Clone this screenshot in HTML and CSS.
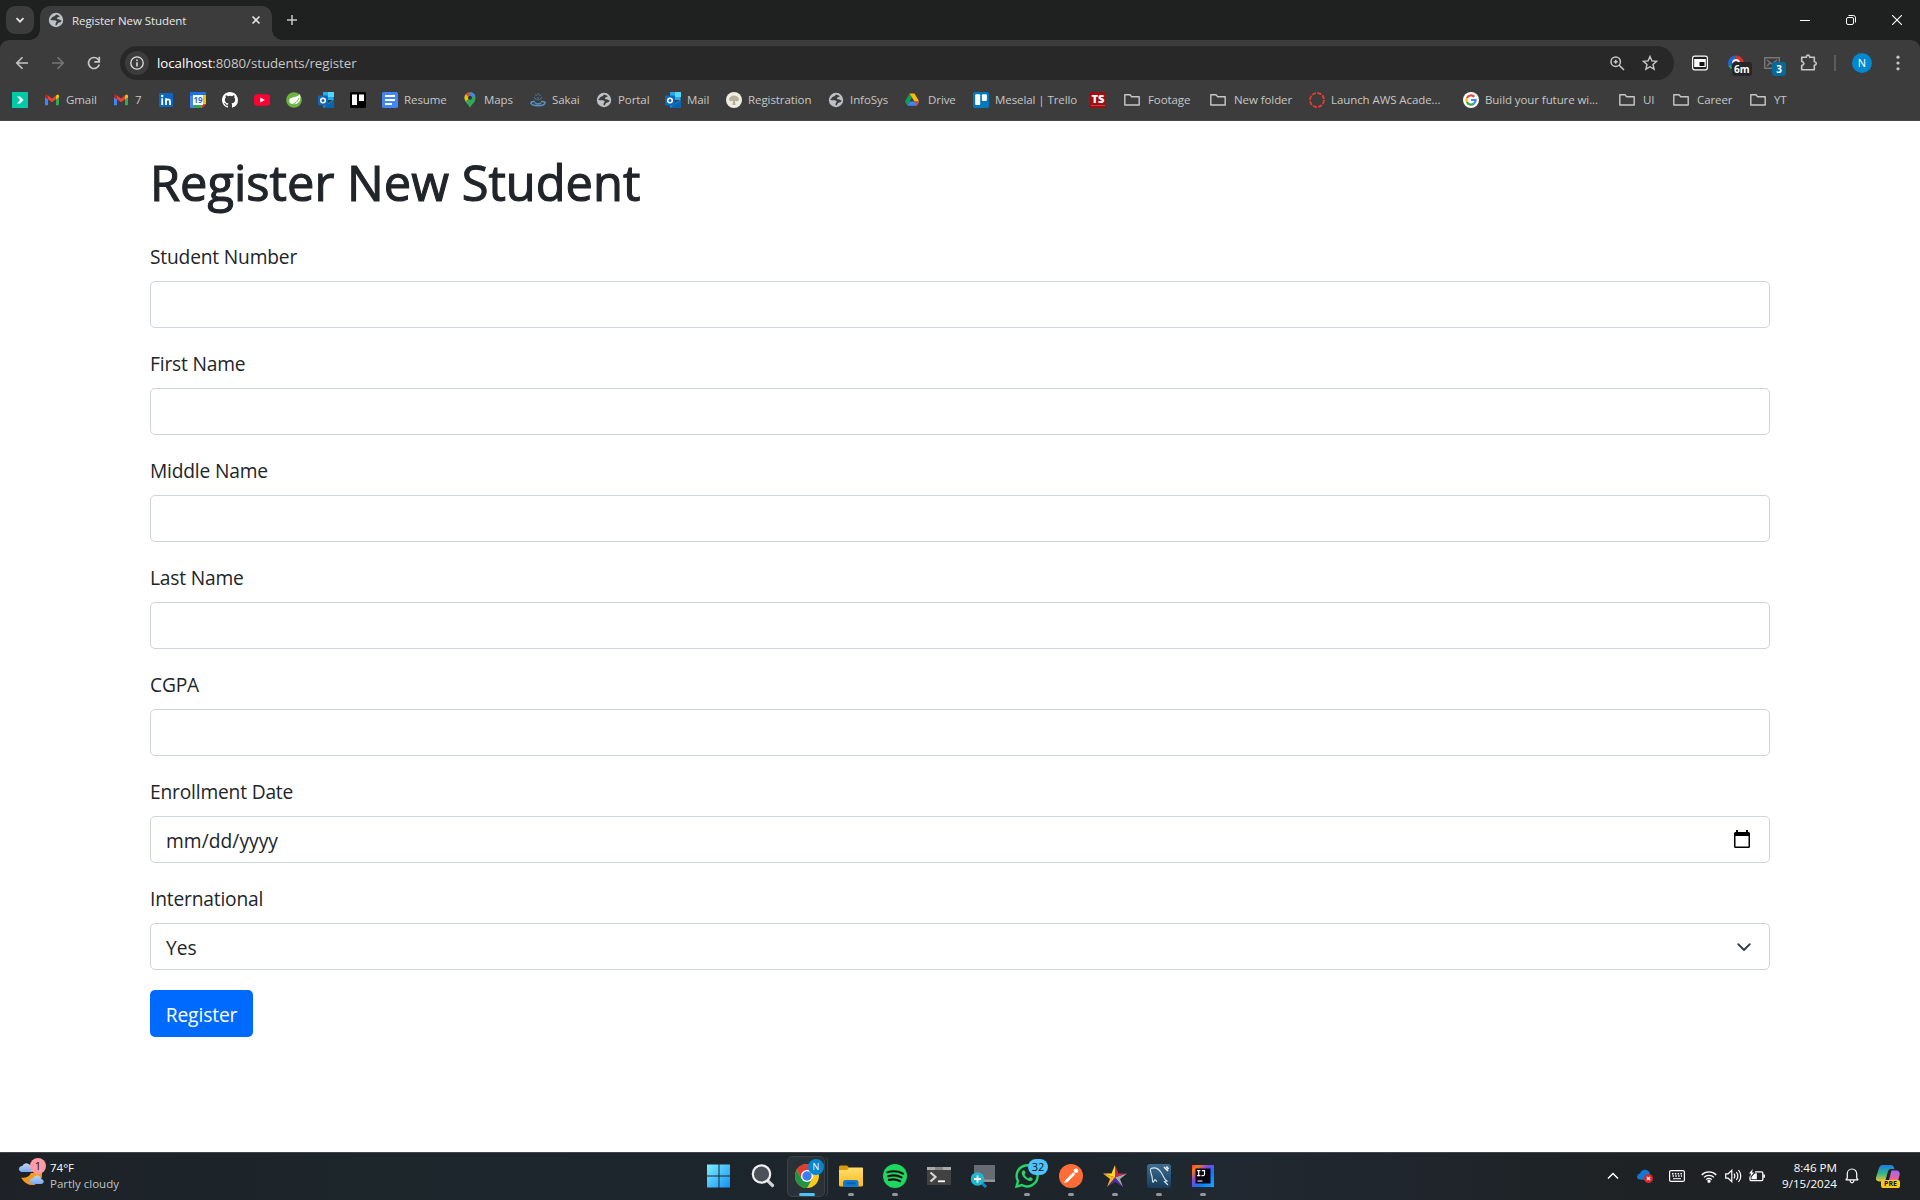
FILE: index.html
```html
<!DOCTYPE html>
<html lang="en">
<head>
<meta charset="utf-8">
<title>Register New Student</title>
<link rel="stylesheet" href="styles.css">
</head>
<body>
<svg class="defs" width="0" height="0">
  <symbol id="globe" viewBox="0 0 16 16"><circle cx="8" cy="8" r="7.200" fill="#bdc1c6"/><path d="M8.300 2.400c-1.700 1-.8 1.900-2.800 2.200C4 4.900 4.100 6.300 2.400 7.500c.5 1.500 5.100-.2 6.100 1.500.7 1.500-1.600 1.600-.8 4.500 2 0 1.200-1.900 2.900-2.700 1.200-.8 2.600-.1 2.900-2.600-1.500.5-1.700-1-2.800-.9-1.200.1-2.200-.6-1.500-1.600.6-.9 2.300-.3 2.500-1.800z" fill="#3c3c3c"/></symbol>
  <symbol id="gmail" viewBox="0 0 16 16"><path d="M1 13.200V5l3 2.200v6z" fill="#4285f4"/><path d="M12 13.200v-6L15 5v7.200q0 1-1 1z" fill="#34a853"/><path d="M1 5.200V4q0-1.500 1.600-1.400L4 3.600v3.600z" fill="#c5221f"/><path d="M4 3.500l4 3 4-3v3.800L8 10.300 4 7.300z" fill="#ea4335"/><path d="M12 3.500l1.400-.9Q15 2.600 15 4v1.200l-3 2.200z" fill="#fbbc04"/></symbol>
  <symbol id="outlook" viewBox="0 0 16 16"><path d="M5 0h10.500v8H5z" fill="#28a8ea"/><path d="M10 0h6v5h-6z" fill="#50d9ff"/><path d="M5 8l5.500 3L16 7v9H5z" fill="#1490df"/><path d="M5 16l11-8v8z" fill="#0a64ad"/><rect y="3.500" width="10" height="10" rx="1" fill="#0f65b9"/><circle cx="5" cy="8.500" r="2.300" fill="none" stroke="#fff" stroke-width="1.500"/></symbol>
  <symbol id="folder" viewBox="0 0 16 16"><path d="M.8 13V2.800H6l1.700 1.900h7.500V13z" fill="none" stroke="#c7c7c7" stroke-width="1.400" stroke-linejoin="round"/></symbol>
</svg>

<header class="chrome">
  <div class="tabstrip">
    <div class="tab-search"><svg viewBox="0 0 10 10" width="10" height="10"><path d="M1.500 3.200L5 6.700l3.500-3.500" fill="none" stroke="#e3e3e3" stroke-width="1.800"/></svg></div>
    <div class="tab">
      <svg class="i16"><use href="#globe"/></svg>
      <span class="tab-title">Register New Student</span>
      <svg width="10" height="10" viewBox="0 0 10 10"><path d="M1.500 1.500l7 7m0-7l-7 7" stroke="#e3e3e3" stroke-width="1.600"/></svg>
    </div>
    <svg class="new-tab" width="12" height="12" viewBox="0 0 12 12"><path d="M6 1v10M1 6h10" stroke="#c7c7c7" stroke-width="1.500"/></svg>
    <div class="window-buttons">
      <svg width="10" height="10" viewBox="0 0 10 10"><path d="M0 5.500h10" stroke="#fff"/></svg>
      <svg width="10" height="10" viewBox="0 0 10 10"><rect x=".5" y="2.500" width="7" height="7" rx="1.500" fill="none" stroke="#fff"/><path d="M2.500.5h4.700q2.300 0 2.300 2.300v4.700" fill="none" stroke="#fff"/></svg>
      <svg width="10" height="10" viewBox="0 0 10 10"><path d="M0 0l10 10M10 0L0 10" stroke="#fff" stroke-width="1.100"/></svg>
    </div>
  </div>

  <div class="toolbar">
    <nav class="nav">
      <svg width="14" height="14" viewBox="0 0 14 14"><path d="M13 7H2m5.500-5.700L1.800 7l5.700 5.700" fill="none" stroke="#c7c7c7" stroke-width="1.600"/></svg>
      <svg width="14" height="14" viewBox="0 0 14 14"><path d="M1 7h11M6.500 1.300L12.200 7l-5.700 5.700" fill="none" stroke="#767676" stroke-width="1.600"/></svg>
      <svg width="14" height="14" viewBox="0 0 14 14"><path d="M12.300 8.500A5.500 5.500 0 1 1 11 3.200l1.200 1.500" fill="none" stroke="#c7c7c7" stroke-width="1.700"/><path d="M12.300.8v5h-5" fill="none" stroke="#c7c7c7" stroke-width="1.700"/></svg>
    </nav>
    <div class="omnibox">
      <div class="site-info"><svg width="14" height="14" viewBox="0 0 14 14"><circle cx="7" cy="7" r="6.200" fill="none" stroke="#e3e3e3" stroke-width="1.300"/><path d="M7 6.200v4.200M7 3.500V5" stroke="#e3e3e3" stroke-width="1.500"/></svg></div>
      <div class="url"><b>localhost</b>:8080/students/register</div>
      <svg width="15" height="15" viewBox="0 0 15 15"><circle cx="5.700" cy="5.700" r="4.700" fill="none" stroke="#c7c7c7" stroke-width="1.500"/><path d="M9 9l5 5M5.700 3.700v4M3.700 5.700h4" stroke="#c7c7c7" stroke-width="1.500"/></svg>
      <svg class="star" width="16" height="16" viewBox="0 0 16 16"><path d="M8 1.500l1.900 4.400 4.700.4L11 9.500l1.100 4.700L8 11.700l-4.100 2.500L5 9.500 1.400 6.300l4.700-.4z" fill="none" stroke="#c7c7c7" stroke-width="1.400"/></svg>
    </div>
    <div class="extensions">
      <svg width="16" height="16" viewBox="0 0 16 16"><rect x=".6" y="1.200" width="14.800" height="13.600" rx="2" fill="#222" stroke="#fff" stroke-width="1.200"/><rect x="2.200" y="4" width="11.600" height="8" fill="#fff"/><rect x="7.500" y="7" width="5" height="4" fill="#111"/></svg>
      <div class="ext"><svg width="16" height="16" viewBox="0 0 16 16"><path d="M2.800 11.500A6 6 0 0 1 8 2.500" fill="none" stroke="#1967d2" stroke-width="4"/><path d="M8 2.500a6 6 0 0 1 6 6" fill="none" stroke="#d93025" stroke-width="4"/><circle cx="8" cy="8" r="4" fill="#eee"/><circle cx="8" cy="8" r="2" fill="#444"/><path d="M1.500 10.500l2 3" stroke="#34a853" stroke-width="2"/></svg><span class="badge badge-dark">6m</span></div>
      <div class="ext"><svg width="16" height="16" viewBox="0 0 16 16"><path d="M.7 2.700h14.600v10.500H.7zM3 5l5 4 5-4M3 11l3-3" fill="none" stroke="#777" stroke-width="1.500"/></svg><span class="badge badge-blue">3</span></div>
      <svg width="18" height="18" viewBox="0 0 18 18"><path d="M1.700 3.300h4.600Q6.600 1 8 1t1.700 2.300h4.600v4.500q2 .2 2 1.700t-2 1.700v4.600H1.700v-4.300q2.200-.4 2.200-2T1.700 7.500z" fill="none" stroke="#c7c7c7" stroke-width="1.600" stroke-linejoin="round"/></svg>
      <i class="divider"></i>
      <span class="avatar">N</span>
      <svg width="4" height="16" viewBox="0 0 4 16" fill="#c7c7c7"><circle cx="2" cy="2.200" r="1.600"/><circle cx="2" cy="8" r="1.600"/><circle cx="2" cy="13.800" r="1.600"/></svg>
    </div>
  </div>

  <nav class="bookmarks">
    <a><svg class="i16" viewBox="0 0 16 16"><path d="M0 0h16v16H0z" fill="#00cba9"/><path d="M5 4.500h3L11.500 8 8 11.500H5L8 8z" fill="#fff"/></svg></a>
    <a><svg class="i16"><use href="#gmail"/></svg>Gmail</a>
    <a><svg class="i16"><use href="#gmail"/></svg>7</a>
    <a><svg class="i16" viewBox="0 0 16 16"><rect x="1" y="1" width="14" height="14" rx="1" fill="#0a66c2"/><path d="M4.200 6.300V13M8 13V6.300M8 9.500q0-2.200 2-2.200T12 9.500V13" fill="none" stroke="#fff" stroke-width="1.800"/><circle cx="4.200" cy="4" r="1.200" fill="#fff"/></svg></a>
    <a><svg class="i16" viewBox="0 0 16 16"><path d="M0 1q0-1 1-1h14q1 0 1 1v3H0z" fill="#1a73e8"/><path d="M0 4h3v12H1q-1 0-1-1z" fill="#4285f4"/><path d="M13 3h3v9h-3z" fill="#fbbc04"/><path d="M3 13h9v3H3z" fill="#34a853"/><path d="M12 12h4l-4 4z" fill="#ea4335"/><path d="M3 3h10v10H3z" fill="#fff"/><text x="8" y="11" font-size="8" font-weight="700" letter-spacing="0" text-anchor="middle" fill="#1a73e8">19</text></svg></a>
    <a><svg class="i16" viewBox="0 0 16 16"><path fill="#fff" d="M8 0C3.580 0 0 3.580 0 8c0 3.540 2.290 6.530 5.470 7.590.4.070.55-.17.55-.38 0-.19-.01-.82-.01-1.490-2.010.37-2.530-.49-2.690-.94-.09-.23-.48-.94-.82-1.130-.28-.15-.68-.52-.01-.53.63-.01 1.080.58 1.230.82.72 1.210 1.870.87 2.330.66.07-.52.28-.87.51-1.070-1.780-.2-3.640-.89-3.640-3.950 0-.87.31-1.590.82-2.150-.08-.2-.36-1.020.08-2.120 0 0 .67-.21 2.200.82a7.600 7.600 0 0 1 4 0c1.530-1.040 2.200-.82 2.200-.82.44 1.100.16 1.920.08 2.120.51.56.82 1.270.82 2.150 0 3.070-1.870 3.750-3.650 3.950.29.25.54.73.54 1.480 0 1.070-.01 1.930-.01 2.200 0 .21.15.46.55.38A8 8 0 0 0 16 8c0-4.420-3.580-8-8-8z"/></svg></a>
    <a><svg class="i16" viewBox="0 0 16 16"><rect y="2.300" width="16" height="11.500" rx="3" fill="#ff0033"/><path d="M6.300 5.500v5L10.800 8z" fill="#fff"/></svg></a>
    <a><svg class="i16" viewBox="0 0 16 16"><circle cx="8" cy="8" r="7.800" fill="#6db33f"/><path d="M14 2c1.500 6-1 10-5.500 10.300C5.500 12.500 3 11 3.200 8.500 3.500 4.500 11 6 14 2z" fill="#fff"/><path d="M3 13c4 0 8-2 10-7" fill="none" stroke="#6db33f"/></svg></a>
    <a><svg class="i16"><use href="#outlook"/></svg></a>
    <a><svg class="i16" viewBox="0 0 16 16"><rect width="16" height="16" rx="1.500" fill="#000"/><rect x="2" y="2.500" width="5" height="10.500" fill="#fff"/><rect x="9" y="2.500" width="5" height="6.500" fill="#fff"/></svg></a>
    <a><svg class="i16" viewBox="0 0 16 16"><rect width="16" height="16" rx="1.500" fill="#4285f4"/><path d="M3 4h10M3 8h10M3 12h7" stroke="#fff" stroke-width="1.800"/></svg>Resume</a>
    <a><svg class="i16" viewBox="0 0 16 16"><path d="M8 16c-.5-3-5.500-5-5.500-10.300A5.500 5.500 0 0 1 8 .2a5.500 5.500 0 0 1 5.500 5.500C13.500 11 8.500 13 8 16z" fill="#34a853"/><path d="M3.800 9.300A6 6 0 0 1 3.700 2.200L8 5.700z" fill="#fbbc04"/><path d="M3.700 2.200Q5.500 0 8.500.2L6 4.500z" fill="#ea4335"/><path d="M8.500.2q3.300.2 4.600 3.300L8 8z" fill="#4285f4"/><circle cx="8" cy="5.700" r="2" fill="#333"/></svg>Maps</a>
    <a><svg class="i16" viewBox="0 0 16 16" fill="none" stroke="#5792c4"><path d="M1 10.500c-1.500 4 15 4.500 14 0-1-1.700-3-1-4-1M1 10.500c1-1.500 3-1 4-1M5 10.500c1 2 5 2 6 0" stroke-width="1.500"/><path d="M8 8.500V5M6.500 8L4 5M9.500 8L12 5M6.500 4L5.500 2.500M9.500 4l1-1.500M8 3V1" stroke-width=".8"/></svg>Sakai</a>
    <a><svg class="i16"><use href="#globe"/></svg>Portal</a>
    <a><svg class="i16"><use href="#outlook"/></svg>Mail</a>
    <a><svg class="i16" viewBox="0 0 16 16"><circle cx="8" cy="8" r="8" fill="#efede0"/><path d="M3 8q0-4 5-4.500Q13 4 13 8q-2 2-4 .8L9.500 13h-3L7 8.800Q4.500 10 3 8z" fill="#b5b09c"/></svg>Registration</a>
    <a><svg class="i16"><use href="#globe"/></svg>InfoSys</a>
    <a class="wide"><svg class="i16" viewBox="0 0 16 16"><path d="M5.500 1.500L1 9.500l2.300 4L8 5.500z" fill="#0f9d58"/><path d="M5.500 1.500h5l4.700 8h-4.700z" fill="#fbbc04"/><path d="M3.300 13.700l2.400-4.200h9.500l-2.400 4.200z" fill="#4285f4"/><path d="M10.500 9.500h4.700l-2.400 4.200z" fill="#ea4335"/></svg>Drive</a>
    <a><svg class="i16" viewBox="0 0 16 16"><rect width="16" height="16" rx="2" fill="#0079bf"/><rect x="2.200" y="2.200" width="5" height="10.800" rx="1" fill="#fff"/><rect x="8.900" y="2.200" width="5" height="6.700" rx="1" fill="#fff"/></svg>Meselal | Trello</a>
    <a><svg class="i16" viewBox="0 0 16 16"><path d="M0 0h16v16H0z" fill="#a00d12"/><text x="8" y="10.500" font-size="11" font-weight="800" letter-spacing="0" text-anchor="middle" fill="#fff">TS</text><path d="M1 13.500h14" stroke="#c55" stroke-width=".8"/></svg></a>
    <a class="wide"><svg class="i16"><use href="#folder"/></svg>Footage</a>
    <a class="wide"><svg class="i16"><use href="#folder"/></svg>New folder</a>
    <a><svg class="i16" viewBox="0 0 16 16"><circle cx="8" cy="8" r="7" fill="none" stroke="#e13c32" stroke-width="1.900" stroke-dasharray="4.200 1.300"/></svg>Launch AWS Acade...</a>
    <a><svg class="i16" viewBox="0 0 16 16"><circle cx="8" cy="8" r="8" fill="#fff"/><g fill="none" stroke-width="2.200"><path d="M3.900 6A4.600 4.600 0 0 1 11.300 4.800" stroke="#ea4335"/><path d="M3.900 6a4.600 4.600 0 0 0 0 4" stroke="#fbbc04"/><path d="M3.900 10a4.600 4.600 0 0 0 7 1.600" stroke="#34a853"/><path d="M10.900 11.600A4.600 4.600 0 0 0 12.600 8H8" stroke="#4285f4"/></g></svg>Build your future wi...</a>
    <a class="wide"><svg class="i16"><use href="#folder"/></svg>UI</a>
    <a class="wide"><svg class="i16"><use href="#folder"/></svg>Career</a>
    <a class="wide"><svg class="i16"><use href="#folder"/></svg>YT</a>
  </nav>
</header>

<main class="container">
  <h1>Register New Student</h1>
  <form>
    <div class="field"><label for="num">Student Number</label><input id="num" class="control" type="text"></div>
    <div class="field"><label for="first">First Name</label><input id="first" class="control" type="text"></div>
    <div class="field"><label for="middle">Middle Name</label><input id="middle" class="control" type="text"></div>
    <div class="field"><label for="last">Last Name</label><input id="last" class="control" type="text"></div>
    <div class="field"><label for="cgpa">CGPA</label><input id="cgpa" class="control" type="text"></div>
    <div class="field"><label>Enrollment Date</label><div class="control"><span class="date">mm/dd/yyyy</span><svg class="cal" width="16" height="18" viewBox="0 0 16 18"><path d="M0 3.500Q0 2 1.500 2H2V0h2v2h8V0h2v2h.5Q16 2 16 3.500v13q0 1.500-1.500 1.500h-13Q0 18 0 16.500zM1.500 6v10.500h13V6z" fill-rule="evenodd"/></svg></div></div>
    <div class="field"><label>International</label><div class="control"><span>Yes</span><svg width="14" height="9" viewBox="0 0 14 9"><path d="M1.200 1.200L7 7l5.800-5.800" fill="none" stroke="#343a40" stroke-width="1.900" stroke-linecap="round" stroke-linejoin="round"/></svg></div></div>
    <button class="btn" type="button">Register</button>
  </form>
</main>

<footer class="taskbar">
  <div class="weather">
    <div class="weather-icon">
      <svg width="25" height="28" viewBox="0 0 25 28"><defs><linearGradient id="cl" x2="0" y2="1"><stop stop-color="#b9d3fb"/><stop offset="1" stop-color="#7ea9ee"/></linearGradient></defs><path d="M2 19.500c3 1 8 0 10-4.500h11q1 9-8 12Q7 28 2 19.500z" fill="#f59a1c"/><path d="M3 14q-3-.3-3-3t3.300-3Q5 4.500 8.500 5.500T13 9v5z" fill="url(#cl)"/><path d="M14 26q-3.500-.3-3.300-3 .3-2.500 3.300-2.800 1.500-3.400 5-2.700 2.800.7 3.300 3.500 2.500.6 2.500 2.500T22.500 26z" fill="url(#cl)"/></svg>
      <span class="alert">1</span>
    </div>
    <div class="weather-text"><span>74°F</span><span class="muted">Partly cloudy</span></div>
  </div>

  <div class="apps">
    <div class="app"><svg width="24" height="24" viewBox="0 0 24 24"><defs><linearGradient id="win" x2="1" y2="1"><stop stop-color="#7df0ff"/><stop offset="1" stop-color="#1390f5"/></linearGradient></defs><path d="M0 .500h11.500v11H0zM12.500.500H23v11H12.500zM0 12.500h11.500v11H0zM12.500 12.500H23v11H12.500z" fill="url(#win)"/></svg></div>
    <div class="app"><svg width="24" height="24" viewBox="0 0 24 24"><path d="M16.500 16.500l5 5" stroke="#cfd3d6" stroke-width="3.200" stroke-linecap="round"/><circle cx="10.500" cy="10" r="8.700" fill="#4b5157" stroke="#eceef0" stroke-width="2.200"/></svg></div>
    <div class="app active"><svg width="24" height="24" viewBox="0 0 24 24"><circle cx="12" cy="12" r="12" fill="#fdc91e"/><path d="M1.600 6A12 12 0 0 1 22.400 6H12L6.800 15z" fill="#e33b2e"/><path d="M1.600 6A12 12 0 0 0 12 24l5.200-9H6.800z" fill="#229342"/><circle cx="12" cy="12" r="6" fill="#fff"/><circle cx="12" cy="12" r="4.700" fill="#3b7df0"/></svg><span class="profile">N</span><i class="run"></i></div>
    <div class="app"><svg width="24" height="24" viewBox="0 0 24 24"><defs><linearGradient id="fo" x2="0" y2="1"><stop stop-color="#ffdf6b"/><stop offset="1" stop-color="#fbb924"/></linearGradient></defs><path d="M0 3q0-1.500 1.500-1.500H8L10.500 4v4H0z" fill="#d99a0b"/><path d="M0 6h8l2.500-2.500H23q1 0 1 1V21q0 1.500-1.500 1.500h-21Q0 22.500 0 21z" fill="url(#fo)"/><path d="M4 23v-4.500q0-2.500 2.500-2.500h10.500q2.500 0 2.500 2.500V23z" fill="#1579d0"/><path d="M7.500 19.300h9" stroke="#0c5fae" stroke-width="2"/></svg><i class="run"></i></div>
    <div class="app"><svg width="24" height="24" viewBox="0 0 24 24"><circle cx="12" cy="12" r="12" fill="#1ed760"/><path d="M4.500 8.200q8.500-2.400 15.500 1.400M5.200 12.200q7.300-2 13.300 1.200M6 15.900q6-1.600 11 1.200" fill="none" stroke="#101010" stroke-width="2.200" stroke-linecap="round"/></svg><i class="run"></i></div>
    <div class="app"><svg width="24" height="24" viewBox="0 0 24 24"><path d="M0 3h24v18H0z" fill="#424242"/><path d="M0 3h24v3H0z" fill="#aaa"/><path d="M8 3h8v3H8z" fill="#888"/><path d="M3.500 8.500L8.500 13l-5 4.500" fill="none" stroke="#d5d5d5" stroke-width="2.200"/><path d="M11 17.300h7" stroke="#fff" stroke-width="1.800"/></svg></div>
    <div class="app"><svg width="24" height="24" viewBox="0 0 24 24"><path d="M3 1h21v16H3z" fill="#676c73"/><path d="M3 15.500h21V18H3z" fill="#8d949b"/><path d="M10 18l5 5" stroke="#1584c7" stroke-width="3"/><circle cx="6.500" cy="15" r="6.800" fill="#21b5cf"/><path d="M6.500 11.500v7M3 15h7" stroke="#fff" stroke-width="1.800"/></svg></div>
    <div class="app"><svg width="24" height="24" viewBox="0 0 24 24"><path d="M1.500 22.500L3 17A10.500 10.500 0 1 1 7 21z" fill="#1d2429" stroke="#25d366" stroke-width="2.400"/><path d="M8 6.500C5.500 8 7 12 10 14.500s6 3.500 7.500 1.500q.8-1.500-.5-2l-2-1-1.500 1.500Q10.500 13 9.500 10.500L10.700 9l-1-2.300Q9 6 8 6.500z" fill="#25d366"/></svg><span class="count">32</span><i class="run"></i></div>
    <div class="app"><svg width="24" height="24" viewBox="0 0 24 24"><circle cx="12" cy="12" r="12" fill="#ff6c37"/><path d="M5 19l1.500-3 7.800-7.800 2 2L8.500 18z" fill="#fff"/><circle cx="17" cy="6.800" r="2.300" fill="#fff"/></svg><i class="run"></i></div>
    <div class="app"><svg width="24" height="24" viewBox="0 0 24 24"><path d="M12 1v12.500L0 9.500h8.500z" fill="#ffd52e"/><path d="M12 1l3.500 8.500H24l-12 4z" fill="#c22852"/><path d="M24 9.500l-7 5.500 3 8-8-9.500z" fill="#a9a9ad"/><path d="M20 23l-8-5-8 5 8-9.500z" fill="#512aa5"/><path d="M4 23l3-8-7-5.500 12 4z" fill="#ffb51b"/></svg><i class="run"></i></div>
    <div class="app"><svg width="24" height="24" viewBox="0 0 24 24"><defs><linearGradient id="my" x2="0" y2="1"><stop stop-color="#3c6d93"/><stop offset="1" stop-color="#173d5d"/></linearGradient></defs><rect width="24" height="24" rx="3" fill="url(#my)"/><path d="M6 18.500c-1-2-.4-4-1-6S2.500 5.500 4 4.500C8 3 12 5 14.500 9s2 6 5.500 8l-2.500.5L21 21M6 18.500l2-3 2 2" fill="none" stroke="#dce7ef" stroke-width="1.100"/><path d="M17 3l4 4m-1.500-4.500L21.500 5" stroke="#fff" stroke-width="1.500"/></svg><i class="run"></i></div>
    <div class="app"><svg width="22" height="22" viewBox="0 0 22 22"><defs><linearGradient id="ij" x2="1" y2="1"><stop stop-color="#fe315d"/><stop offset=".15" stop-color="#f97a12"/><stop offset=".4" stop-color="#7b45e6"/><stop offset=".65" stop-color="#087cfa"/><stop offset="1" stop-color="#20a7ff"/></linearGradient></defs><path d="M0 0h22v22H0z" fill="url(#ij)"/><path d="M3.500 3.500h15v15h-15z" fill="#080410"/><path d="M5 5.700h3.400M6.700 5.700v5M5 10.700h3.400M9.800 5.700h2.700v3.500q0 1.500-1.500 1.500H9.500M5.500 16h5" fill="none" stroke="#fff" stroke-width="1.200"/></svg><i class="run"></i></div>
  </div>

  <div class="tray">
    <svg class="up" width="12" height="8" viewBox="0 0 12 8"><path d="M1 6.500l5-5 5 5" fill="none" stroke="#fff" stroke-width="1.500"/></svg>
    <svg width="16" height="14" viewBox="0 0 16 14"><path d="M3 10.500Q0 10.300 0 7.500q.2-2.600 3-3Q4.500.5 8.500.8q3.500.4 4.500 4L9 11z" fill="#0f78d4"/><circle cx="11.500" cy="9.500" r="4.500" fill="#d6262e"/><path d="M9.800 7.800l3.400 3.400m0-3.400l-3.400 3.400" stroke="#fff" stroke-width="1.200"/></svg>
    <svg width="16" height="12" viewBox="0 0 16 12"><rect x=".6" y=".6" width="14.800" height="10.800" rx="1.500" fill="none" stroke="#fff" stroke-width="1.200"/><path d="M3 3.700h10.500M3.500 6h9.500" stroke="#fff" stroke-width="1.400" stroke-dasharray="1.500 1.300"/><path d="M4 8.700h8" stroke="#fff"/></svg>
    <svg width="16" height="13" viewBox="0 0 16 13" fill="none" stroke="#fff" stroke-width="1.300"><path d="M.7 5a10.200 10.200 0 0 1 14.600 0M3 7.400a7 7 0 0 1 10 0M5.200 9.600a4 4 0 0 1 5.600 0"/><circle cx="8" cy="11.200" r="1" fill="#fff"/></svg>
    <svg width="17" height="14" viewBox="0 0 17 14" fill="none" stroke="#fff" stroke-width="1.200"><path d="M.7 4.800h2.500L6.800 1.300v11.400L3.200 9.200H.7zM9 4.700q1.600 2.300 0 4.600M11.300 3q3 4 0 8M13.500 1q4.500 6 0 12"/></svg>
    <svg width="16" height="14" viewBox="0 0 16 14"><path d="M6 2.800h6.500q1.300 0 1.300 1.300v6.300q0 1.300-1.300 1.300H2.300Q1 11.700 1 10.400V7.500M15.300 5.500v3.300" fill="none" stroke="#fff" stroke-width="1.300"/><path d="M2.500 10.300V8L6 4.300h1.800v6z" fill="#fff"/><path d="M3.800 0L0 4.500h2L1.200 8 5 3.500H3z" fill="#fff"/></svg>
    <div class="clock"><span>8:46 PM</span><span>9/15/2024</span></div>
    <svg class="bell" width="14" height="16" viewBox="0 0 14 16"><path d="M1 11.800l1.300-2V5.700a4.700 4.700 0 0 1 9.400 0v4.100l1.300 2zM5 12.300q.3 2.500 2 2.500t2-2.500" fill="none" stroke="#fff" stroke-width="1.200" stroke-linejoin="round"/></svg>
    <div class="copilot"><svg width="24" height="24" viewBox="0 0 24 24"><defs><linearGradient id="ca" x2="0" y2="1"><stop stop-color="#1a7bea"/><stop offset=".55" stop-color="#3bb881"/><stop offset="1" stop-color="#f2c332"/></linearGradient><linearGradient id="cb" x2="0" y2="1"><stop stop-color="#9b6cf7"/><stop offset=".6" stop-color="#e55fa2"/><stop offset="1" stop-color="#f89b4b"/></linearGradient></defs><path d="M6 1h9q2.500 0 3.500 4h-4q-2 0-3 4l-2 7q-1 1.500-3 1.500H3q-4-.5-3-4L3 4q1-3 3-3z" fill="url(#ca)"/><path d="M15.500 6.500h5q4 .5 3 5l-1.500 5q-1 2.500-4 2.500h-7q1.500-1 2-3l1.500-6z" fill="url(#cb)"/></svg><span class="pre">PRE</span></div>
  </div>
</footer>
</body>
</html>
```
FILE: styles.css
```css
* { box-sizing: border-box; }
body {
  margin: 0;
  width: 1920px;
  height: 1200px;
  overflow: hidden;
  display: flex;
  flex-direction: column;
  background: #fff;
  color: #212529;
  font-family: "Open Sans", "Noto Sans", sans-serif;
}
svg { display: block; flex: none; }
.defs { position: absolute; }
.i16 { width: 16px; height: 16px; }

/* Browser window */
.chrome { flex: none; height: 121px; background: #1f2120; color: #dedede; }
.tabstrip { height: 40px; display: flex; align-items: center; padding-left: 6px; }
.tab-search {
  width: 28px; height: 28px; margin-right: 6px;
  display: grid; place-items: center;
  background: #3c3c3c; border-radius: 9px;
}
.tab {
  position: relative;
  width: 232px; height: 34px; align-self: flex-end;
  display: flex; align-items: center; padding: 0 11px 6px 8px;
  background: #3c3c3c; border-radius: 10px 10px 0 0;
}
.tab::before, .tab::after {
  content: ""; position: absolute; bottom: 0; width: 10px; height: 10px;
}
.tab::before { left: -10px; background: radial-gradient(circle at 0 0, transparent 9.5px, #3c3c3c 10px); }
.tab::after { right: -10px; background: radial-gradient(circle at 100% 0, transparent 9.5px, #3c3c3c 10px); }
.tab-title { flex: 1; margin-left: 8px; font-size: 11.5px; letter-spacing: -.06px; color: #e6e6e6; }
.new-tab { margin-left: 14px; }
.window-buttons { margin-left: auto; padding-right: 18px; display: flex; gap: 36px; }

.toolbar {
  height: 46px; display: flex; align-items: center;
  background: #3c3c3c; border-radius: 9px 9px 0 0;
}
.nav { width: 120px; padding-left: 15px; display: flex; gap: 22px; }
.omnibox {
  width: 1554px; height: 34px; padding: 0 16px 0 5px;
  display: flex; align-items: center;
  background: #282828; border-radius: 17px;
}
.site-info {
  width: 24px; height: 24px; display: grid; place-items: center;
  background: #3c3c3c; border-radius: 50%;
}
.url { flex: 1; margin-left: 8px; font-size: 13.3px; letter-spacing: -.04px; color: #c7c7c7; }
.url b { font-weight: 400; color: #fff; }
.star { margin-left: 17px; }
.extensions { flex: 1; display: flex; align-items: center; padding-left: 18px; }
.ext { position: relative; margin-left: 20px; }
.ext + svg { margin-left: 20px; }
.badge {
  position: absolute; left: 4px; top: 7px; height: 14px; padding: 0 2px;
  font-size: 10px; line-height: 14px; font-weight: 700; color: #fff; border-radius: 3px;
}
.badge-dark { background: #242628; }
.badge-blue { left: 8px; width: 14px; padding: 0; text-align: center; background: #05699b; }
.divider { width: 2px; height: 16px; margin: 0 16px 0 16px; background: #5c5c5c; }
.avatar {
  width: 20px; height: 20px; margin-right: 24px; border-radius: 50%;
  background: #0288d1; color: #fff; font-size: 11px; line-height: 20px; text-align: center;
}
.bookmarks {
  height: 35px; padding: 0 0 7px 12px;
  display: grid; align-items: center;
  grid-template-columns: 32px 69px 45px repeat(7, 32px) 80px 68px 66px 69px 61px 102px 76px 69px 117px 34px 86px 99px 154px 156px 54px 77px 80px;
  background: #3c3c3c; border-bottom: 1px solid #484848;
  font-size: 11.5px; letter-spacing: -.08px; color: #c7c7c7; white-space: nowrap;
}
.bookmarks a { display: flex; align-items: center; gap: 6px; }
.bookmarks a.wide { gap: 8px; }

/* Registration form */
.container { flex: 1; padding: 30px 150px 0; font-size: 19.2px; line-height: 30px; }
h1 {
  margin: 0 0 30px; padding-top: 1px; height: 60px;
  font-size: 48.8px; line-height: 60px; font-weight: 400;
  -webkit-text-stroke: 1.1px #212529;
}
.field { margin-bottom: 20px; }
.field label { display: block; height: 30px; padding-top: 1px; margin-bottom: 10px; letter-spacing: -.18px; }
.control {
  width: 100%; height: 47px; padding: 2px 18px 0 15px;
  display: flex; align-items: center; justify-content: space-between;
  background: #fff; border: 1px solid #ced4da; border-radius: 5px;
}
.cal { margin: -3px 1px 0 0; }
.date { letter-spacing: .05px; }
.btn {
  display: block; width: 103px; height: 47px; padding: 2px 0 0;
  background: #006aff; color: #fff; border: 0; border-radius: 5px;
  font: 19.2px/30px "Open Sans", "Noto Sans", sans-serif; letter-spacing: -.1px;
}

/* Taskbar */
.taskbar {
  flex: none; height: 48px; display: grid; grid-template-columns: 697px 528px 1fr;
  background: linear-gradient(90deg, #1e2227, #1c262b 20%, #1d252b 55%, #202831 64%, #1e2225 85%);
  border-top: 1px solid #42464a; color: #fff;
}
.weather { display: flex; padding-left: 19px; }
.weather-icon { position: relative; width: 31px; padding-top: 5px; }
.alert {
  position: absolute; left: 11px; top: 5px; width: 16px; height: 16px; border-radius: 50%;
  background: #ff9ba4; color: #111; font-size: 11px; line-height: 16px; text-align: center;
}
.weather-text { display: flex; flex-direction: column; padding-top: 7px; font-size: 11.5px; line-height: 16px; }
.muted { color: #bfc3c6; }
.apps { display: flex; }
.app { position: relative; width: 44px; height: 47px; padding-bottom: 1px; display: grid; place-items: center; }
.app.active::before {
  content: ""; position: absolute; inset: 3px 4px 3px 2px;
  background: #2a3137; border: 1px solid #3a4147; border-radius: 5px;
  box-shadow: 3px 0 0 -1px #1d252a, 4px 0 0 -1px #3a4147;
}
.app svg { position: relative; }
.run { position: absolute; left: 19px; bottom: 4px; width: 6px; height: 3px; border-radius: 2px; background: #94989b; }
.active .run { left: 14px; width: 16px; background: #4cc2ff; }
.profile {
  position: absolute; left: 23px; top: 6px; width: 16px; height: 16px; border-radius: 50%;
  background: #0288d1; color: #fff; font-size: 9px; line-height: 16px; text-align: center;
}
.count {
  position: absolute; left: 23px; top: 6px; width: 20px; height: 16px; border-radius: 8px;
  background: #4cc2ff; color: #111; font-size: 11px; line-height: 16px; text-align: center;
}
.tray { display: flex; align-items: center; padding: 0 0 1px 382px; }
.tray > svg { margin-right: 16px; }
.tray > .up { margin-right: 18px; }
.tray > svg:nth-child(4) { margin-right: 8px; }
.tray > svg:nth-child(5) { margin-right: 7px; }
.tray > svg:nth-child(6) { margin-right: 0; }
.clock { flex: 1; display: flex; flex-direction: column; align-items: flex-end; font-size: 11.6px; line-height: 16px; }
.tray > .bell { margin: 0 17px 0 8px; }
.copilot { position: relative; margin-right: 20px; }
.pre {
  position: absolute; left: 5px; bottom: 0; width: 19px; height: 8px; border-radius: 2px;
  background: #ffc91a; color: #111; font-size: 7px; line-height: 8px; font-weight: 700; text-align: center;
}
```
